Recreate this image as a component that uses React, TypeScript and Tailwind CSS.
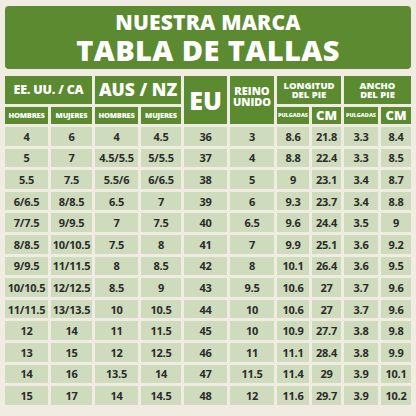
import React from 'react';

const rows: string[][] = [
  ['4', '6', '4', '4.5', '36', '3', '8.6', '21.8', '3.3', '8.4'],
  ['5', '7', '4.5/5.5', '5/5.5', '37', '4', '8.8', '22.4', '3.3', '8.5'],
  ['5.5', '7.5', '5.5/6', '6/6.5', '38', '5', '9', '23.1', '3.4', '8.7'],
  ['6/6.5', '8/8.5', '6.5', '7', '39', '6', '9.3', '23.7', '3.4', '8.8'],
  ['7/7.5', '9/9.5', '7', '7.5', '40', '6.5', '9.6', '24.4', '3.5', '9'],
  ['8/8.5', '10/10.5', '7.5', '8', '41', '7', '9.9', '25.1', '3.6', '9.2'],
  ['9/9.5', '11/11.5', '8', '8.5', '42', '8', '10.1', '26.4', '3.6', '9.5'],
  ['10/10.5', '12/12.5', '8.5', '9', '43', '9.5', '10.6', '27', '3.7', '9.6'],
  ['11/11.5', '13/13.5', '10', '10.5', '44', '10', '10.6', '27', '3.7', '9.6'],
  ['12', '14', '11', '11.5', '45', '10', '10.9', '27.7', '3.8', '9.8'],
  ['13', '15', '12', '12.5', '46', '11', '11.1', '28.4', '3.8', '9.9'],
  ['14', '16', '13.5', '14', '47', '11.5', '11.4', '29', '3.9', '10.1'],
  ['15', '17', '14', '14.5', '48', '12', '11.6', '29.7', '3.9', '10.2'],
];

const head = 'bg-[#5b8a30] text-white flex items-center justify-center text-center font-extrabold leading-none';

export default function App() {
  return (
    <div
      className="w-[416px] h-[416px] bg-[#f1ece2] px-[5px] pt-[6px] overflow-hidden"
      style={{ fontFamily: '"Open Sans", Inter, sans-serif' }}
    >
      {/* Banner */}
      <div className="h-[63px] bg-[#5b8a30] rounded-[4px] flex flex-col items-center justify-center text-white font-extrabold leading-none">
        <div className="text-[21px] tracking-[0.2px]">NUESTRA MARCA</div>
        <div className="text-[29px] mt-[2px] tracking-[0.4px]">TABLA DE TALLAS</div>
      </div>

      {/* Table */}
      <div className="mt-[7px] grid grid-cols-[43px_41px_43px_40px_43px_44px_32px_29px_34px_30px] grid-rows-[28px_17px_repeat(13,18.6px)] gap-[3px]">
        <div className={`${head} col-span-2 text-[12.5px] tracking-[-0.2px]`}>EE. UU. / CA</div>
        <div className={`${head} col-span-2 text-[17.5px]`}>AUS / NZ</div>
        <div className={`${head} row-span-2 text-[25px]`}>EU</div>
        <div className={`${head} row-span-2 text-[11px] leading-[11px] pb-[8px]`}>
          REINO
          <br />
          UNIDO
        </div>
        <div className={`${head} col-span-2 text-[9.5px] leading-[11px]`}>
          LONGITUD
          <br />
          DEL PIE
        </div>
        <div className={`${head} col-span-2 text-[9.5px] leading-[11px]`}>
          ANCHO
          <br />
          DEL PIE
        </div>

        <div className={`${head} text-[7.5px] font-bold tracking-[-0.2px]`}>HOMBRES</div>
        <div className={`${head} text-[7.5px] font-bold tracking-[-0.2px]`}>MUJERES</div>
        <div className={`${head} text-[7.5px] font-bold tracking-[-0.2px]`}>HOMBRES</div>
        <div className={`${head} text-[7.5px] font-bold tracking-[-0.2px]`}>MUJERES</div>
        <div className={`${head} text-[5.5px] font-bold`}>PULGADAS</div>
        <div className={`${head} text-[13px]`}>CM</div>
        <div className={`${head} text-[5.5px] font-bold`}>PULGADAS</div>
        <div className={`${head} text-[13px]`}>CM</div>

        {rows.map((r, i) =>
          r.map((v, j) => (
            <div
              key={`${i}-${j}`}
              className="bg-[#cfdbbd] text-[#2b2b2b] flex items-center justify-center text-[11px] font-bold leading-none tracking-[-0.2px]"
            >
              {v}
            </div>
          ))
        )}
      </div>
    </div>
  );
}
